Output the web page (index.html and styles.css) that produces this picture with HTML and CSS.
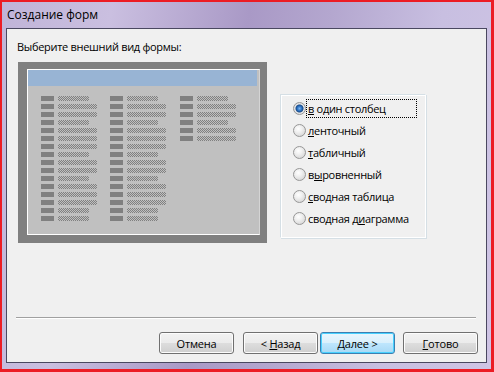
FILE: index.html
```html
<!DOCTYPE html>
<html lang="ru">
<head>
    <meta charset="UTF-8">
    <title>Создание форм</title>
    <link rel="stylesheet" href="styles.css">
</head>
<body>
    <div class="window">
        <div class="titlebar">Создание форм</div>
        <div class="client">
            <p class="prompt">Выберите внешний вид формы:</p>
            <div class="main">
                <div class="preview">
                    <div class="sheet">
                        <div class="sheet-head"></div>
                        <div class="fields">
                            <div class="col">
                                <div class="field"><i></i><b></b></div>
                                <div class="field"><i></i><b class="long"></b></div>
                                <div class="field"><i></i><b class="long"></b></div>
                                <div class="field"><i></i><b></b></div>
                                <div class="field"><i></i><b class="long"></b></div>
                                <div class="field"><i></i><b class="long"></b></div>
                                <div class="field"><i></i><b class="long"></b></div>
                                <div class="field"><i></i><b></b></div>
                                <div class="field"><i></i><b class="long"></b></div>
                                <div class="field"><i></i><b class="long"></b></div>
                                <div class="field"><i></i><b></b></div>
                                <div class="field"><i></i><b class="long"></b></div>
                                <div class="field"><i></i><b class="long"></b></div>
                                <div class="field"><i></i><b class="long"></b></div>
                                <div class="field"><i></i><b></b></div>
                                <div class="field"><i></i><b></b></div>
                            </div>
                            <div class="col">
                                <div class="field"><i></i><b></b></div>
                                <div class="field"><i></i><b class="long"></b></div>
                                <div class="field"><i></i><b class="long"></b></div>
                                <div class="field"><i></i><b></b></div>
                                <div class="field"><i></i><b class="long"></b></div>
                                <div class="field"><i></i><b class="long"></b></div>
                                <div class="field"><i></i><b class="long"></b></div>
                                <div class="field"><i></i><b></b></div>
                                <div class="field"><i></i><b class="long"></b></div>
                                <div class="field"><i></i><b class="long"></b></div>
                                <div class="field"><i></i><b></b></div>
                                <div class="field"><i></i><b class="long"></b></div>
                                <div class="field"><i></i><b class="long"></b></div>
                                <div class="field"><i></i><b class="long"></b></div>
                                <div class="field"><i></i><b></b></div>
                                <div class="field"><i></i><b></b></div>
                            </div>
                            <div class="col">
                                <div class="field"><i></i><b></b></div>
                                <div class="field"><i></i><b class="long"></b></div>
                                <div class="field"><i></i><b class="long"></b></div>
                                <div class="field"><i></i><b></b></div>
                                <div class="field"><i></i><b class="long"></b></div>
                                <div class="field"><i></i><b class="long"></b></div>
                            </div>
                        </div>
                    </div>
                </div>

                <div class="options">
                    <div class="option"><span class="radio checked"></span><span class="caption focused"><u>в</u> один столбец</span></div>
                    <div class="option"><span class="radio"></span><span class="caption"><u>л</u>енточный</span></div>
                    <div class="option"><span class="radio"></span><span class="caption"><u>т</u>абличный</span></div>
                    <div class="option"><span class="radio"></span><span class="caption">в<u>ы</u>ровненный</span></div>
                    <div class="option"><span class="radio"></span><span class="caption"><u>с</u>водная таблица</span></div>
                    <div class="option"><span class="radio"></span><span class="caption">сводная д<u>и</u>аграмма</span></div>
                </div>
            </div>

            <div class="separator"></div>

            <div class="buttons">
                <button class="btn">Отмена</button>
                <button class="btn back">&lt; <u>Н</u>азад</button>
                <button class="btn default"><u>Д</u>алее &gt;</button>
                <button class="btn finish"><u>Г</u>отово</button>
            </div>
        </div>
    </div>
</body>
</html>
```

FILE: styles.css
```css
/* окно мастера */
body {
    margin: 0;
    background-color: #ec1c24;
    font-family: "Open Sans", "Noto Sans", sans-serif;
}

.window {
    width: 489px;
    height: 367px;
    margin: 2px 0 0 2px;
    display: flex;
    flex-direction: column;
    background: linear-gradient(100deg, #c0b4d8 0%, #cabfe0 20%, #a999c6 45%, #b4a7cf 60%, #c8bfe1 80%, #cfc4e4 100%);
}

.titlebar {
    height: 26px;
    line-height: 26px;
    padding-left: 5px;
    font-size: 12px;
    color: #000;
}

.client {
    margin: 0 4px 6px 4px;
    flex: 1;
    border: 1px solid #4a4860;
    background-color: #f0f0f0;
    display: flex;
    flex-direction: column;
    letter-spacing: -0.3px;
}

.prompt {
    margin: 10px 0 0 10px;
    font-size: 11px;
    line-height: 15px;
}

.main {
    display: flex;
    align-items: flex-start;
    margin: 8px 0 0 11px;
}

/* картинка-образец */
.preview {
    width: 249px;
    height: 181px;
    box-sizing: border-box;
    padding: 7px 7px 8px 9px;
    background-color: #808080;
}

.sheet {
    height: 100%;
    box-sizing: border-box;
    border: 1px solid #fff;
    border-right-color: #d4d4d4;
    background-color: #c0c0c0;
}

.sheet-head {
    height: 16px;
    margin-right: 2px;
    background-color: #98b4d4;
}

.fields {
    display: flex;
    padding: 10px 0 0 13px;
}

.col {
    width: 69px;
}

.col + .col {
    width: 70px;
}

.field {
    display: flex;
    height: 8px;
}

.field i {
    width: 13px;
    height: 5px;
    margin-right: 4px;
    background-color: #808080;
}

.field b {
    width: 31px;
    height: 5px;
    background: repeating-conic-gradient(#808080 0 25%, #c0c0c0 0 50%) 0 0 / 2px 2px;
}

.field b.long {
    width: 39px;
}

/* переключатели */
.options {
    width: 146px;
    height: 144px;
    box-sizing: border-box;
    margin: 32px 0 0 13px;
    padding-top: 2px;
    border: 1px solid #d5dfe5;
    border-right-color: #fff;
    border-bottom-color: #fff;
    box-shadow: inset 1px 1px 0 #fff, 1px 1px 0 #d5dfe5;
}

.option {
    display: flex;
    align-items: center;
    height: 22px;
    padding-left: 12px;
    font-size: 11px;
}

.radio {
    width: 13px;
    height: 13px;
    box-sizing: border-box;
    border-radius: 50%;
    border: 1px solid #979797;
    background: radial-gradient(circle at 40% 35%, #fff 0%, #f0f0f0 35%, #cdcdcd 100%);
}

.radio.checked {
    background: radial-gradient(circle at 50% 50%, #7ab6f0 0%, #2a6fc0 30%, #1b4d8a 45%, #e8e8e8 58%, #cfcfcf 100%);
}

.caption {
    margin-left: 1px;
    padding: 1px;
    color: #000;
}

.caption.focused {
    width: 107px;
    outline: 1px dotted #000;
}

.separator {
    margin: 74px 10px 0 9px;
    height: 1px;
    background-color: #a0a0a0;
    border-bottom: 1px solid #fff;
}

/* кнопки */
.buttons {
    display: flex;
    justify-content: flex-end;
    margin-top: 13px;
    padding-right: 8px;
}

.btn {
    width: 75px;
    height: 22px;
    padding: 0;
    font-family: inherit;
    font-size: 11px;
    letter-spacing: -0.2px;
    color: #000;
    border: 1px solid #707070;
    border-radius: 3px;
    background: linear-gradient(#f2f2f2 0%, #ebebeb 50%, #dddddd 51%, #cfcfcf 100%);
    box-shadow: inset 0 0 0 1px #fcfcfc;
}

.btn.back {
    margin-left: 9px;
}

.btn.default {
    margin-left: 2px;
    border-color: #3c7fb1;
    box-shadow: inset 0 0 0 1px #48d1ff;
    background: linear-gradient(#eaf6fd 0%, #d9f0fc 50%, #bee6fd 51%, #a7d9f5 100%);
}

.btn.finish {
    margin-left: 8px;
}
```
